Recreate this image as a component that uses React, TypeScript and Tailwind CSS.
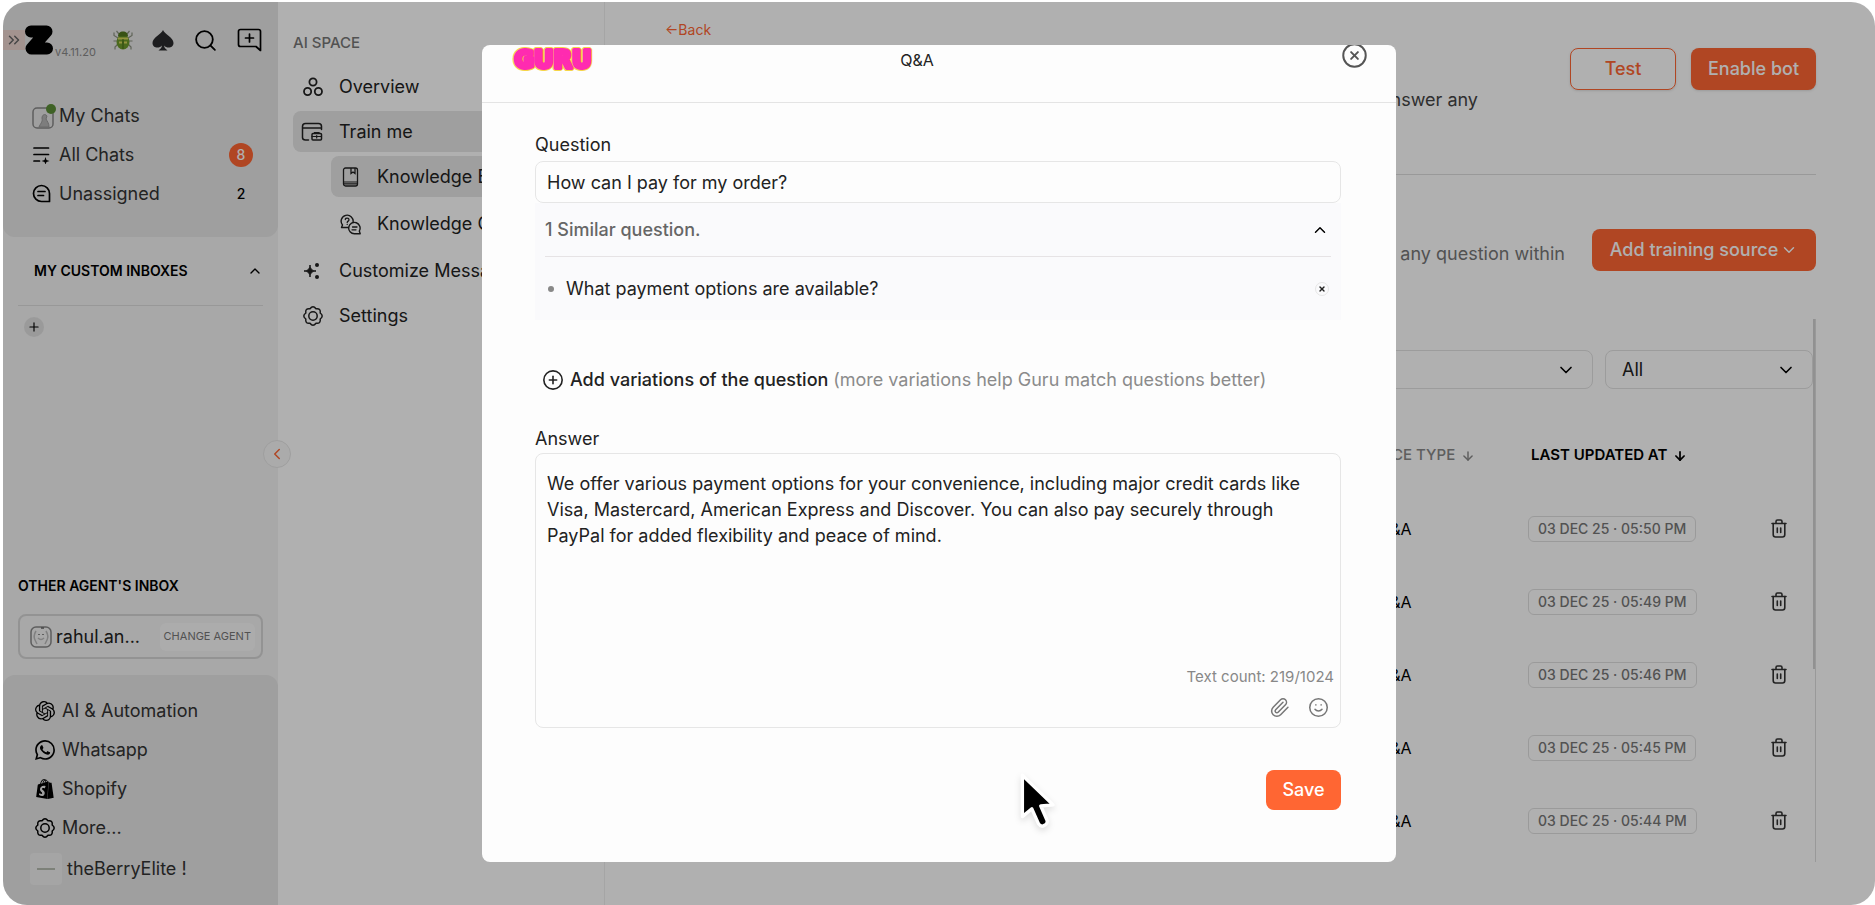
import type { ReactNode } from "react";
import {
  ArrowDown,
  ChevronDown,
  ChevronLeft,
  ChevronUp,
  ChevronsRight,
  CirclePlus,
  CircleX,
  MessageSquare,
  Paperclip,
  Plus,
  Search,
  Smile,
  X,
} from "lucide-react";
import { SiOpenai, SiShopify, SiWhatsapp } from "react-icons/si";

const answer =
  "We offer various payment options for your convenience, including major credit cards like Visa, Mastercard, American Express and Discover. You can also pay securely through PayPal for added flexibility and peace of mind.";

const sources = [
  { name: "How can I pay for my order?", updated: "03 DEC 25 · 05:50 PM" },
  { name: "Where is my order?", updated: "03 DEC 25 · 05:49 PM" },
  { name: "Do you ship abroad?", updated: "03 DEC 25 · 05:46 PM" },
  { name: "Can I return an item?", updated: "03 DEC 25 · 05:45 PM" },
  { name: "How do I contact you?", updated: "03 DEC 25 · 05:44 PM" },
];

const ZLogo = () => (
  <svg width="28" height="30" viewBox="0 0 28 30" aria-label="Z logo">
    <path
      d="M6 6.5H21.5L6.5 23.5H22"
      fill="none"
      stroke="#000"
      strokeWidth="12"
      strokeLinecap="round"
      strokeLinejoin="round"
    />
  </svg>
);

const BugIcon = () => (
  <svg width="20" height="20" viewBox="0 0 20 20" fill="none">
    <path
      d="M6 4L3.5 1M14 4L16.500 1M5 8L1 5.500V2.500M15 8L19 5.500V2.500M4 11H0.500M16 11H19.500M5 14L2 17V19.500M15 14L18 17V19.500"
      stroke="#8b9180"
      strokeWidth="1.2"
    />
    <ellipse cx="10" cy="12" rx="6.500" ry="7.500" fill="#6d9a2c" />
    <path d="M5 6.500C5 3 7 1.500 10 1.500S15 3 15 6.500Z" fill="#52781f" />
    <path d="M5 8.500H15M6 12.500H9M11 12.500H14" stroke="#d5d65a" strokeWidth="1.800" />
    <path d="M10 9V19" stroke="#47691b" />
  </svg>
);

const SpadeIcon = () => (
  <svg width="22" height="21" viewBox="0 0 22 21" fill="#2b2b2d">
    <path d="M11 0C12.500 4 21.500 7.500 21.500 13C21.500 18 15 19 12 15.500C12.200 17.500 13.500 19 15.500 20.500H6.500C8.500 19 9.800 17.500 10 15.500C7 19 0.500 18 0.500 13C0.500 7.500 9.500 4 11 0Z" />
  </svg>
);

const NewChatIcon = () => (
  <svg width="25" height="24" viewBox="0 0 25 24" fill="none" stroke="currentColor" strokeWidth="1.700" strokeLinejoin="round">
    <path d="M3.500 1.500H21.500C22.600 1.500 23.500 2.400 23.500 3.500V22.500L19 18.500H3.500C2.400 18.500 1.500 17.600 1.500 16.500V3.500C1.500 2.400 2.400 1.500 3.500 1.500Z" />
    <path d="M12.500 6V14M8.500 10H16.500" strokeLinecap="round" />
  </svg>
);

const MyChatsIcon = () => (
  <svg width="24" height="26" viewBox="0 0 24 26" fill="none">
    <rect x="1" y="5" width="20" height="20" rx="4" stroke="#888" strokeWidth="1.500" />
    <path d="M7 24C8 21 11 19 10 15C10 12 13 10 15 13L14 16C15 18 17 20 17 24Z" fill="#b5b5b5" stroke="#999" />
    <circle cx="19" cy="6" r="5" fill="#5c8f37" />
  </svg>
);

const AllChatsIcon = () => (
  <svg width="18" height="18" viewBox="0 0 18 18" fill="none" stroke="currentColor" strokeWidth="1.700" strokeLinecap="round">
    <path d="M2 2H16.500M2 8.500H16.500M2 15H7.500" />
    <path d="M13.500 11L14.500 14L17.500 15L14.500 16L13.500 18.500L12.500 16L9.500 15L12.500 14Z" fill="currentColor" stroke="none" />
  </svg>
);

const UnassignedIcon = () => (
  <svg width="19" height="19" viewBox="0 0 19 19" fill="none" stroke="currentColor" strokeWidth="1.700" strokeLinecap="round">
    <path d="M17.500 17.500V9.500A8 8 0 1 0 9.500 17.500Z" strokeLinejoin="round" />
    <path d="M6 7.500H13M6 11.500H11.500" />
  </svg>
);

const CogIcon = () => (
  <svg width="20" height="20" viewBox="0 0 20 20" fill="none" stroke="currentColor" strokeWidth="1.500" strokeLinejoin="round">
    <path d="M17.200 7Q21.200 10 17.200 13Q18 18 13 17.200Q10 21.200 7 17.200Q2 18 2.800 13Q-1.200 10 2.800 7Q2 2 7 2.800Q10 -1.200 13 2.800Q18 2 17.200 7Z" />
    <circle cx="10" cy="10" r="4.200" />
  </svg>
);

const OverviewIcon = () => (
  <svg width="20" height="20" viewBox="0 0 20 20" fill="none" stroke="currentColor" strokeWidth="1.800">
    <circle cx="10" cy="5" r="3.600" />
    <circle cx="4.600" cy="14.500" r="3.600" />
    <circle cx="15.400" cy="14.500" r="3.600" />
  </svg>
);

const TrainIcon = () => (
  <svg width="22" height="20" viewBox="0 0 22 20" fill="none" stroke="currentColor" strokeWidth="1.500" strokeLinecap="round">
    <path d="M20.500 7.500V4.500Q20.500 1.500 17.500 1.500H4.500Q1.500 1.500 1.500 4.500V15.500Q1.500 18 4.500 18H7.500M1.500 6H20.500" />
    <rect x="11" y="11.500" width="9.500" height="6.500" rx="1" />
    <path d="M13.500 11.500V10.500H18V11.500M11 14.500H20.500M15.700 13.500V16" strokeWidth="1.200" />
  </svg>
);

const BookIcon = () => (
  <svg width="17" height="20" viewBox="0 0 17 20" fill="none" stroke="currentColor" strokeWidth="1.300">
    <rect x="1.500" y="1" width="14" height="18" rx="2" />
    <path d="M1.500 15H15.500M1.500 16.800H15.500" strokeWidth="1.200" />
    <path d="M9 1V6.500L11 5L13 6.500V1" />
  </svg>
);

const QuestionsIcon = () => (
  <svg width="21" height="21" viewBox="0 0 21 21" fill="none" stroke="currentColor" strokeWidth="1.400" strokeLinecap="round" strokeLinejoin="round">
    <path d="M13 8.500A6 6 0 1 0 2.500 11L1.500 13.500H8.500" />
    <path d="M5.300 5.500C5.300 3.500 9 3.600 9 5.700C9 7.200 7.200 7 7.200 8.500M7.200 10.300V10.400" strokeWidth="1.300" />
    <path d="M19.300 17A5.700 5.700 0 1 0 14.500 19.800H20.200Z" />
    <path d="M12.500 13H17M12 15.800H16" strokeWidth="1.300" />
  </svg>
);

const SparkleIcon = () => (
  <svg width="18" height="18" viewBox="0 0 18 18" fill="currentColor">
    <path d="M7 3C7.600 7.200 8.600 8.400 13 9C8.600 9.600 7.600 10.800 7 15C6.400 10.800 5.400 9.600 1 9C5.400 8.400 6.400 7.200 7 3Z" stroke="currentColor" />
    <circle cx="14" cy="3" r="2" />
    <circle cx="14" cy="15" r="2" />
  </svg>
);

const TrashIcon = () => (
  <svg width="16" height="19" viewBox="0 0 16 19" fill="none" stroke="currentColor" strokeWidth="1.600" strokeLinecap="round">
    <path d="M1 4.500H15M5 4.500V2.500Q5 1 6.500 1H9.500Q11 1 11 2.500V4.500" />
    <path d="M2.200 4.500V15.500Q2.200 18 4.500 18H11.500Q13.800 18 13.800 15.500V4.500M6.300 9V13.500M9.700 9V13.500" />
  </svg>
);

const AgentIcon = () => (
  <svg width="22" height="22" viewBox="0 0 22 22" fill="none">
    <rect x="1" y="1" width="20" height="20" rx="5" stroke="#888" strokeWidth="1.500" />
    <path d="M6 5Q3 10 5 14L7 18M16 5Q19 10 17 14L15 18M8 12Q11 15 14 12" stroke="#bbb" strokeWidth="1.500" />
    <path d="M9 8V9M13 8V9M11 2H14" stroke="#666" strokeWidth="1.500" />
  </svg>
);

const GuruLogo = () => (
  <svg width="86" height="30" viewBox="0 0 86 30" strokeLinejoin="round" aria-label="Guru">
    <g fontFamily="DejaVu Sans" fontWeight="700" fontSize="24" textAnchor="middle">
      <text x="43" y="23" fill="#f6d548" stroke="#f6d548" strokeWidth="6">GURU</text>
      <text x="43" y="23" fill="#ff2bb0" stroke="#ff2bb0" strokeWidth="4">GURU</text>
    </g>
  </svg>
);

const Cursor = () => (
  <svg width="38" height="58" viewBox="0 0 34 52" className="drop-shadow-md">
    <path
      d="M3 3V40L11.500 33L17.500 46.500Q20 50 23.500 47.500Q26 45.500 25 43L19.500 30.500L30.500 29.500Z"
      fill="#000"
      stroke="#fff"
      strokeWidth="3"
      strokeLinejoin="round"
    />
  </svg>
);

const SideLink = ({ icon, label, children }: { icon: ReactNode; label: string; children?: ReactNode }) => (
  <a href="#" className="flex h-[39px] items-center text-lg text-[#333]">
    <span className="flex w-[27px] shrink-0 items-center text-black">{icon}</span>
    <span className="flex-1">{label}</span>
    {children}
  </a>
);

const Sidebar = () => (
  <aside className="flex w-[275px] shrink-0 flex-col bg-[#f3f3f3]">
    <section className="rounded-b-xl bg-[#e6e6e6] pb-6">
      <div className="flex h-[76px] items-center">
        <span className="flex w-[22px] justify-center bg-[#ecd5cf] py-px text-[#666]">
          <ChevronsRight size={18} />
        </span>
        <ZLogo />
        <span className="w-[54px] self-end pb-[18px] pl-0.5 text-[11px] text-[#888]">v4.11.20</span>
        <div className="flex flex-1 items-center justify-between pr-4 pl-1.5">
          <BugIcon />
          <SpadeIcon />
          <button aria-label="Search">
            <Search size={25} strokeWidth={1.75} />
          </button>
          <button aria-label="New chat">
            <NewChatIcon />
          </button>
        </div>
      </div>
      <nav className="mt-[18px] pr-[25px] pl-[29px]">
        <SideLink icon={<MyChatsIcon />} label="My Chats" />
        <SideLink icon={<AllChatsIcon />} label="All Chats">
          <span className="flex size-6 items-center justify-center rounded-full bg-[#ff6633] text-sm font-medium text-white">8</span>
        </SideLink>
        <SideLink icon={<UnassignedIcon />} label="Unassigned">
          <span className="w-6 text-center text-sm font-medium text-black">2</span>
        </SideLink>
      </nav>
    </section>

    <section className="px-[15px]">
      <div className="flex h-[69px] items-center justify-between border-b border-[#dcdcdc] pl-4">
        <h2 className="text-sm font-semibold">MY CUSTOM INBOXES</h2>
        <ChevronUp size={16} />
      </div>
      <button aria-label="Add inbox" className="mt-[11px] ml-[6px] flex size-5 items-center justify-center rounded-full bg-[#e0e0e0]">
        <Plus size={14} />
      </button>
    </section>

    <section className="mt-auto px-[15px] pb-4">
      <h2 className="text-sm font-semibold">OTHER AGENT'S INBOX</h2>
      <div className="mt-[18px] flex h-[45px] items-center rounded-lg border-2 border-[#d6d6d6] pr-1.5 pl-2.5">
        <AgentIcon />
        <span className="flex-1 pl-1 text-lg text-[#222]">rahul.an...</span>
        <button className="h-7 rounded-md bg-[#fafafa] px-1 text-[11px] text-[#777]">CHANGE AGENT</button>
      </div>
    </section>

    <section className="rounded-t-xl bg-[#e6e6e6] pt-4 pb-[18px] pl-8">
      <SideLink icon={<SiOpenai size={20} />} label="AI & Automation" />
      <SideLink icon={<SiWhatsapp size={20} />} label="Whatsapp" />
      <SideLink icon={<SiShopify size={20} />} label="Shopify" />
      <SideLink icon={<CogIcon />} label="More..." />
      <div className="-ml-[5px] mt-1 flex h-9 items-center gap-[5px] text-lg text-[#333]">
        <span className="flex size-8 items-center justify-center rounded bg-[#f0f0f0] text-[#b5bbb0]">
          <svg width="18" height="2" viewBox="0 0 18 2" stroke="currentColor" strokeWidth="2">
            <path d="M0 1H18" />
          </svg>
        </span>
        <span>theBerryElite !</span>
      </div>
    </section>
  </aside>
);

const SpaceNav = () => (
  <nav className="w-[327px] shrink-0 border-r border-[#f0f0f0] pl-[15px] text-lg text-[#222]">
    <h2 className="pt-[31px] text-[15px] leading-5 font-medium text-[#777]">AI SPACE</h2>
    <a href="#" className="mt-3 flex h-11 items-center gap-4 pl-2.5">
      <OverviewIcon />
      Overview
    </a>
    <a href="#" className="mt-0.5 flex h-[41px] items-center gap-4 rounded-l-lg bg-[#e6e6e6] pl-2">
      <TrainIcon />
      Train me
    </a>
    <a href="#" className="mt-1 ml-[38px] flex h-[41px] items-center gap-[18px] rounded-l-lg bg-[#e6e6e6] pl-[11px]">
      <BookIcon />
      Knowledge Base
    </a>
    <a href="#" className="mt-1.5 ml-[38px] flex h-[42px] items-center gap-4 pl-[9px]">
      <QuestionsIcon />
      Knowledge Gaps
    </a>
    <a href="#" className="mt-[3px] flex h-[45px] items-center gap-[18px] pl-2.5">
      <SparkleIcon />
      Customize Messages
    </a>
    <a href="#" className="flex h-[45px] items-center gap-4 pl-2.5">
      <CogIcon />
      Settings
    </a>
  </nav>
);

const SelectBox = ({ label, option, className }: { label: string; option: string; className: string }) => (
  <div className={`relative ${className}`}>
    <select aria-label={label} className="h-[39px] w-full appearance-none rounded-lg border border-[#e2e2e2] px-4 text-lg text-[#222]">
      <option>{option}</option>
    </select>
    <ChevronDown size={20} className="pointer-events-none absolute top-2.5 right-[17px]" />
  </div>
);

const TrainingPage = () => (
  <main className="flex min-w-0 flex-1 flex-col pr-[59px] pb-[43px] pl-[60px]">
    <a href="#" className="mt-[18px] text-sm leading-5 text-[#ff6633]">←Back</a>
    <header className="mt-2 flex h-[127px] items-start border-b border-[#dedede]">
      <p className="mt-[38px] flex-1 pr-[92px] text-right text-lg text-[#444]">Guru learns from what you add here and can answer any</p>
      <button className="h-[42px] w-[106px] rounded-lg border border-[#ff6633] text-lg font-medium text-[#ff6633] shadow-sm">Test</button>
      <button className="ml-[15px] h-[42px] w-[125px] rounded-lg bg-[#ff6633] text-lg font-medium text-white shadow-sm">Enable bot</button>
    </header>
    <div className="mt-[54px] flex h-[42px] items-center">
      <p className="flex-1 pt-2 pr-[27px] text-right text-lg text-[#777]">Add sources so that Guru can answer any question within</p>
      <button className="flex h-[42px] w-[224px] items-center justify-center gap-0.5 rounded-lg bg-[#ff6633] text-lg font-medium text-white">
        Add training source
        <ChevronDown size={18} />
      </button>
    </div>

    <div className="relative mt-12 min-h-0 flex-1 overflow-hidden border-r border-[#dedede] pt-[31px] pr-0.5">
      <span className="absolute top-0 right-0 h-[350px] w-0.5 bg-[#d2d2d2]" />
      <div className="flex gap-3">
        <SelectBox label="Source" option="All sources" className="flex-1" />
        <SelectBox label="Type" option="All" className="w-[208px]" />
      </div>
      <table className="mt-[30px] w-full table-fixed text-left">
        <thead>
          <tr className="h-[73px] text-[15px]">
            <th className="font-medium text-[#888]">NAME</th>
            <th className="w-[178px] font-medium text-[#888]">
              <span className="flex items-center gap-1.5">
                SOURCE TYPE <ArrowDown size={14} strokeWidth={2.5} />
              </span>
            </th>
            <th className="w-[243px] pl-[3px] font-semibold text-black">
              <span className="flex items-center gap-1.5">
                LAST UPDATED AT <ArrowDown size={14} strokeWidth={3} />
              </span>
            </th>
            <th className="w-[42px]" aria-label="Actions" />
          </tr>
        </thead>
        <tbody>
          {sources.map((source) => (
            <tr key={source.name} className="h-[73px]">
              <td>{source.name}</td>
              <td>
                <span className="flex items-center gap-2">
                  <MessageSquare size={20} />
                  Q&A
                </span>
              </td>
              <td>
                <span className="inline-block rounded-md border border-[#e0e0e0] px-[9px] text-sm leading-6 font-medium text-[#777]">{source.updated}</span>
              </td>
              <td>
                <button aria-label={`Delete ${source.name}`} className="flex text-[#333]">
                  <TrashIcon />
                </button>
              </td>
            </tr>
          ))}
        </tbody>
      </table>
    </div>
  </main>
);

const QuestionModal = () => (
  <div role="dialog" aria-label="Q&A" className="relative w-[914px] overflow-hidden rounded-lg bg-[#fdfdfd] text-lg text-[#222]">
    <header className="relative flex h-[58px] items-start justify-between border-b border-[#e4e4e4] pr-7 pl-7">
      <GuruLogo />
      <h1 className="absolute top-[3px] right-11 left-0 text-center text-base">Q&A</h1>
      <button aria-label="Close" className="-mt-[3px] text-[#555]">
        <CircleX size={27} strokeWidth={1.75} />
      </button>
    </header>

    <form className="pt-7 pr-[55px] pb-[52px] pl-[53px]">
      <label htmlFor="question" className="block">Question</label>
      <input
        id="question"
        type="text"
        defaultValue="How can I pay for my order?"
        className="mt-0.5 block h-[42px] w-full rounded-lg border border-[#e6e6e6] px-[11px]"
      />

      <div className="h-[117px] bg-[#fafafc] px-2.5">
        <button type="button" className="flex h-[54px] w-full items-center justify-between border-b border-[#e6e3e5] pr-0.5 text-[#666]">
          <span className="font-medium">1 Similar question.</span>
          <ChevronUp size={18} className="text-black" />
        </button>
        <div className="flex h-[63px] items-center pr-0.5">
          <span className="mr-3 ml-[3px] size-1.5 rounded-full bg-[#888]" />
          <span className="flex-1">What payment options are available?</span>
          <button type="button" aria-label="Remove variation" className="flex size-3.5 items-center justify-center rounded-full border border-[#e6e6e6]">
            <X size={8} strokeWidth={4} />
          </button>
        </div>
      </div>

      <button type="button" className="mt-[46px] ml-[7px] flex items-center gap-1.5">
        <CirclePlus size={22} strokeWidth={1.75} />
        <span className="font-medium">
          Add variations of the question <span className="font-normal text-[#8b8b8b]">(more variations help Guru match questions better)</span>
        </span>
      </button>

      <label htmlFor="answer" className="mt-[31px] block">Answer</label>
      <div className="flex h-[275px] flex-col rounded-lg border border-[#e6e6e6] px-[11px] pt-[17px]">
        <textarea id="answer" defaultValue={answer} className="w-full flex-1 resize-none leading-[26px]" />
        <p className="-mr-[5px] text-right text-[15px] leading-5 text-[#888]">Text count: 219/1024</p>
        <div className="flex h-10 items-center justify-end gap-[18px] text-[#777]">
          <button type="button" aria-label="Attach file">
            <Paperclip size={21} strokeWidth={1.75} />
          </button>
          <button type="button" aria-label="Add emoji">
            <Smile size={21} strokeWidth={1.75} />
          </button>
        </div>
      </div>

      <div className="mt-[42px] flex justify-end">
        <button type="submit" className="h-10 w-[75px] rounded-lg bg-[#ff6633] font-medium text-white">Save</button>
      </div>
    </form>

    <div className="pointer-events-none absolute top-[727px] left-[537px]">
      <Cursor />
    </div>
  </div>
);

export default function App() {
  return (
    <div className="h-screen bg-white pt-0.5 pl-[3px] font-['Inter',sans-serif]">
      <div className="relative flex h-full overflow-hidden rounded-3xl bg-white">
        <Sidebar />
        <SpaceNav />
        <TrainingPage />
        <button
          aria-label="Collapse sidebar"
          className="absolute top-1/2 left-[260px] flex size-7 -translate-y-1/2 items-center justify-center rounded-full border border-[#e6e6e6] bg-[#f8f8f8] text-[#ff6633]"
        >
          <ChevronLeft size={18} />
        </button>
        <div className="absolute inset-0 flex items-center justify-center bg-black/31">
          <QuestionModal />
        </div>
      </div>
    </div>
  );
}
